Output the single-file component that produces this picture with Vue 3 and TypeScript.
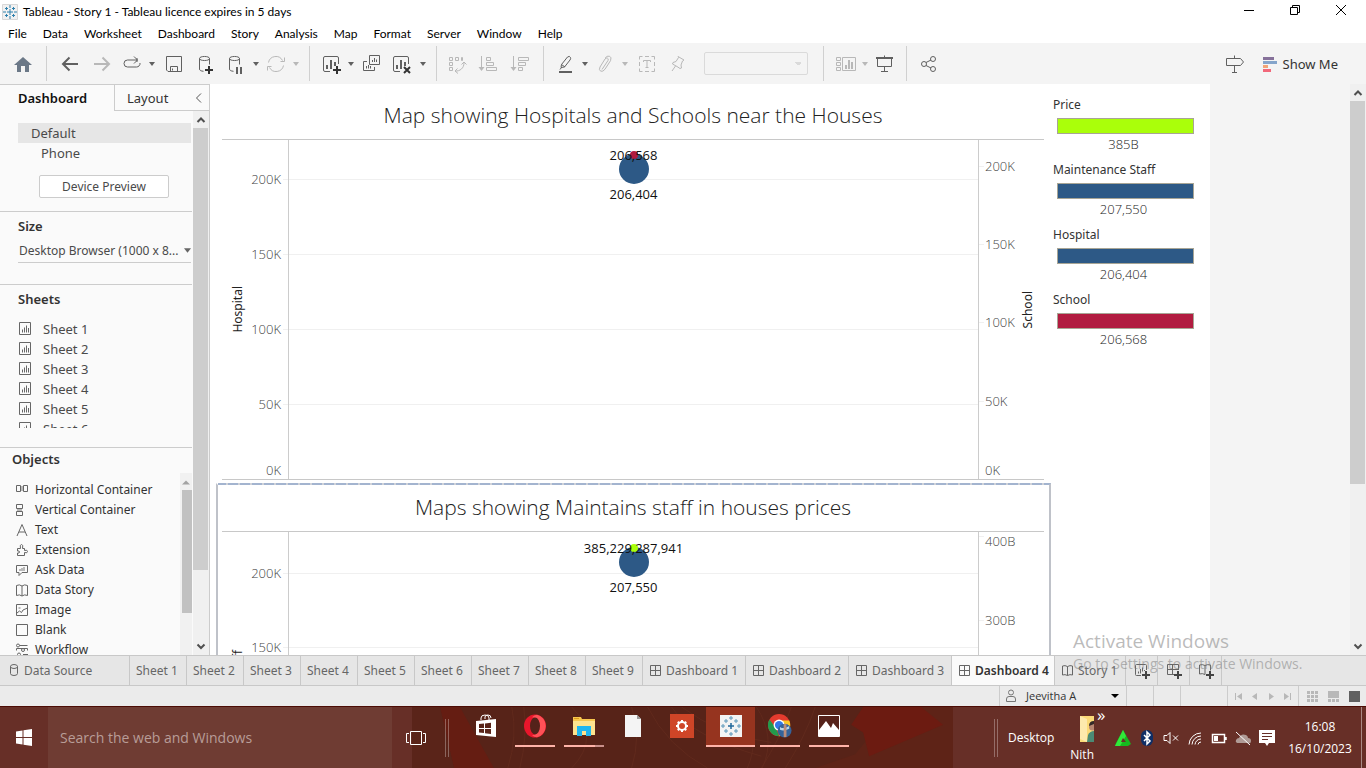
<script setup lang="ts">
import { ref } from 'vue'

interface Tool {
  name: string
  line?: string
  solid?: string
  bold?: string
  size?: 'wide' | 'tight' | 'caret'
  dim?: boolean
  kind?: 'separator' | 'combo'
}

const chartBox = 'M11 19.5H6a1.5 1.5 0 0 1-1.5-1.5V6A1.5 1.5 0 0 1 6 4.500h12a1.500 1.500 0 0 1 1.500 1.500v6'
const cylinder = 'M5.500 6.500c0-2.700 10-2.700 10 0s-10 2.700-10 0V17c0 1.500 1.500 2 4 2.300M15.500 6.500v6'
const bars = 'M7 13h2v4H7zM11 8h2v9h-2zM15 10h2v4h-2z'

const sep: Tool = { name: '', kind: 'separator' }
const caret = (name: string, dim = false): Tool => ({ name, size: 'caret', dim, solid: 'M3 10h6l-3 4z' })

const tools: Tool[] = [
  { name: 'Start page', solid: 'M12 5l9 8h-3v7h-4v-6h-4v6H6v-7H3z' },
  sep,
  { name: 'Undo', bold: 'M20 12H5M11.500 5.500L5 12l6.500 6.500' },
  { name: 'Redo', bold: 'M4 12h15M12.500 5.500L19 12l-6.500 6.500', dim: true },
  { name: 'Replay', size: 'tight', line: 'M17 8H7.500a3.500 3.500 0 0 0 0 7h9a3.500 3.500 0 0 0 3.500-4M14 4.500l3.500 3.500-3.500 3.500M17 6v4' },
  caret('Replay options'),
  { name: 'Save', line: 'M4.500 4.500h15v15H6l-1.500-1.500zM8.500 19.500v-5h7v5M10.500 16.500v2' },
  { name: 'New data source', line: cylinder, bold: 'M15 14v8M11 18h8' },
  { name: 'Pause auto updates', size: 'tight', line: cylinder, solid: 'M12 15h2v7h-2zM16 15h2v7h-2z' },
  caret('Update options'),
  { name: 'Refresh', size: 'tight', dim: true, line: 'M4.500 10.500a7.500 7.500 0 0 1 14-2M19.500 13.500a7.500 7.500 0 0 1-14 2M20.500 5.500v4h-4M3.500 18.500v-4h4' },
  caret('Refresh options', true),
  sep,
  { name: 'New worksheet', size: 'tight', line: chartBox, solid: bars, bold: 'M18 14v8M14 18h8' },
  caret('New sheet options'),
  { name: 'Duplicate', size: 'tight', line: 'M10.500 3.500h10v9h-10zM8 9.500H4.500v9h11V15M13.500 10V8M15.500 10V6M17.500 10V7.500M7.500 16.500V14M9.500 16.500V13M11.500 16.500V14' },
  { name: 'Clear sheet', line: chartBox, solid: bars, bold: 'M15 15l6 6M21 15l-6 6' },
  caret('Clear options'),
  sep,
  { name: 'Swap rows and columns', size: 'tight', dim: true, line: 'M3.500 5.500h3v3h-3zM9.500 5.500h3v3h-3zM15.500 5.500h1v3h-1zM3.500 10.500h3v3h-3zM3.500 15.500h3v3h-3zM9 19c5 .5 9-3 9-8M11.500 16.500L9 19l3 2.500M15.500 12.500l2.500-2.500 2.500 2.500' },
  { name: 'Sort ascending', dim: true, line: 'M5.500 4v13M10.500 5.500h4v3h-4zM10.500 10.500h7v3h-7zM10.500 15.500h10v3h-10z', solid: 'M2.500 15h6l-3 4z' },
  { name: 'Sort descending', dim: true, line: 'M5.500 4v13M10.500 5.500h10v3h-10zM10.500 10.500h7v3h-7zM10.500 15.500h4v3h-4z', solid: 'M2.500 15h6l-3 4z' },
  sep,
  { name: 'Highlight', size: 'tight', line: 'M8.500 12.500l6-7.500q2-1.500 3 .5.500 1-.5 2.500l-5.500 7-3.500.500zM8.500 12.500l3.500 2.500M8.500 15.500L7 17.500', solid: 'M6 19h13v2H6z' },
  caret('Highlight options'),
  { name: 'Group members', size: 'tight', dim: true, line: 'M9 17.500l6-9q.8-2-.7-2.500-1.300-.3-2.300 1l-5 8q-1.500 3 .7 4.200 2.300.8 4.300-2l5.500-8.500q1.500-3.500-1-4.500-2.500-.7-4.500 2' },
  caret('Group options', true),
  { name: 'Show mark labels', dim: true, line: 'M4.500 7.500v-3h3M10 4.500h4M16.500 4.500h3v3M19.500 10v4M19.500 16.500v3h-3M14 19.500h-4M7.500 19.500h-3v-3M4.500 14v-4M8.500 10V8.500h7V10M12 8.500v7M10.500 15.500h3' },
  { name: 'Fix axes', size: 'tight', dim: true, line: 'M13 4.500l6 3.500-1.500 1-1.500 4 .500 3-1.500.500-3-2-4.500-2.500.5-1.500 3-1 2.500-4zM10.500 14L7 19' },
  { name: 'Fit', kind: 'combo' },
  sep,
  { name: 'Show cards', size: 'tight', dim: true, line: 'M3.500 5.500h4v3h-4zM3.500 10.500h4v3h-4zM3.500 15.500h4v3h-4zM9.500 5.500h13v13h-13z', solid: 'M12 13h2v4h-2zM15 8h2v9h-2zM18 10h2v7h-2z' },
  caret('Card options', true),
  { name: 'Presentation mode', size: 'tight', solid: 'M3 5h17v2H3z', line: 'M4.500 7v7.500h14V7M11.500 14.500v5M8 19.500h7M11.500 3.500V5' },
  sep,
  { name: 'Share', line: 'M8.500 12a2.500 2.500 0 1 1-5 0 2.500 2.500 0 0 1 5 0zM17.500 7a2.500 2.500 0 1 1-5 0 2.500 2.500 0 0 1 5 0zM17.500 17a2.500 2.500 0 1 1-5 0 2.500 2.500 0 0 1 5 0zM8 10.500l5-2.500M8 13.500l5 2.500' },
]

const menus = ['File', 'Data', 'Worksheet', 'Dashboard', 'Story', 'Analysis', 'Map', 'Format', 'Server', 'Window', 'Help']
const sheets = [1, 2, 3, 4, 5, 6]

const objects = [
  { label: 'Horizontal Container', line: 'M1.500 2.500h4v6h-4zM8.500 2.500h4v6h-4z', shade: 'M6 3h2v5H6z' },
  { label: 'Vertical Container', line: 'M1.500 1.500h6v4h-6zM1.500 8.500h6v4h-6z', shade: 'M2 6h5v2H2z' },
  { label: 'Text', line: 'M2 13L7 1.500 12 13M4 9h6', shade: '' },
  { label: 'Extension', line: 'M2.500 5.500h3q-1-4 1-4t1 4h2v2q3-1 3 1t-3 1v3h-7V10q2 .5 2-1t-2-1z', shade: '' },
  { label: 'Ask Data', line: 'M1.500 2.500h11v7H7l-3 3v-3H1.500z', shade: 'M4 6h2v2H4zM6 5h2v3H6zM8 4h2v4H8z' },
  { label: 'Data Story', line: 'M1.500 2.500q3-1.500 5.500.5 2.500-2 5.500-.5v10q-3-1.500-5.500.5-2.500-2-5.500-.5zM7 3v10', shade: '' },
  { label: 'Image', line: 'M1.500 1.500h11v11h-11zM2 10l2.500-2 2 1.500L8 7l4.500-2', shade: 'M3.500 4h2v2h-2z' },
  { label: 'Blank', line: 'M1.500 1.500h11v11h-11z', shade: '' },
  { label: 'Workflow', line: 'M4.500 2.500a1.500 1.500 0 1 1-3 0 1.500 1.500 0 0 1 3 0zM4.500 2.500h8M1.500 7.500v-2h11v2M9.500 7a1.500 1.500 0 1 1-3 0 1.500 1.500 0 0 1 3 0zM5.500 11.500a1.500 1.500 0 1 1-3 0 1.500 1.500 0 0 1 3 0zM8 11.500h5', shade: '' },
]

interface Tick { text: string; value: number }
interface Chart {
  title: string
  left: { name: string; max: number; ticks: Tick[] }
  right: { name: string; max: number; ticks: Tick[] }
  big: { text: string; value: number }
  small: { text: string; value: number; color: string }
  selected: boolean
}

const thousands = [200, 150, 100, 50, 0].map((n) => ({ text: `${n}K`, value: n }))
const charts: Chart[] = [
  {
    title: 'Map showing Hospitals and Schools near the Houses',
    left: { name: 'Hospital', max: 226, ticks: thousands },
    right: { name: 'School', max: 216.4, ticks: thousands },
    big: { text: '206,404', value: 206.404 },
    small: { text: '206,568', value: 206.568, color: '#b11c40' },
    selected: false,
  },
  {
    title: 'Maps showing Maintains staff in houses prices',
    left: { name: 'Maintenance Staff', max: 227.4, ticks: thousands },
    right: { name: 'Price', max: 404.7, ticks: [400, 300, 200, 100, 0].map((n) => ({ text: `${n}B`, value: n })) },
    big: { text: '207,550', value: 207.55 },
    small: { text: '385,229,287,941', value: 385.2, color: '#aaff0a' },
    selected: true,
  },
]

const at = (value: number, max: number) => `${((1 - value / max) * 100).toFixed(2)}%`
const labelAt = (value: number, max: number) => `clamp(9px, ${at(value, max)}, calc(100% - 9px))`
const aboveZero = (ticks: Tick[]) => ticks.filter((t) => t.value > 0)

const legends = [
  { name: 'Price', value: '385B', color: '#aaff0a' },
  { name: 'Maintenance Staff', value: '207,550', color: '#2d5986' },
  { name: 'Hospital', value: '206,404', color: '#2d5986' },
  { name: 'School', value: '206,568', color: '#b11c40' },
]

const gridIcon = 'M1.500 1.500h10v10h-10zM6.500 1.500v10M1.500 6.500h10'
const storyIcon = 'M1.500 2q2.500-1 5 .5 2.500-1.500 5-.5v9q-2.500-1-5 .5-2.500-1.500-5-.5zM6.500 2.500v9'
const bookTabs = [
  ...Array.from({ length: 9 }, (_, i) => ({ label: `Sheet ${i + 1}`, kind: 'worksheet', icon: '' })),
  ...[1, 2, 3, 4].map((n) => ({ label: `Dashboard ${n}`, kind: 'board', icon: gridIcon })),
  { label: 'Story 1', kind: 'story', icon: storyIcon },
]
const activeTab = ref('Dashboard 4')
const newTabs = [
  { name: 'New worksheet', icon: 'M8 13.500H3.500a1 1 0 0 1-1-1v-9a1 1 0 0 1 1-1h9a1 1 0 0 1 1 1V8M5.500 9.500v2M7.500 7v4.500M9.500 5.500v4M11.500 8v1' },
  { name: 'New dashboard', icon: 'M9 12.500H2.500v-10h11V8M7.500 2.500v10M2.500 7.500h11' },
  { name: 'New story', icon: 'M8 12.500q-2.500-1.500-5.500-.5v-9q3-1 5.500.5 2.500-1.500 5.500-.5v5.500M8 3.500v9' },
]
const pagers = [
  { name: 'First', d: 'M1 2h1v7H1zM8 2v7L3 5.500z' },
  { name: 'Previous', d: 'M7 2v7L2 5.500z' },
  { name: 'Next', d: 'M3 2v7l5-3.500z' },
  { name: 'Last', d: 'M8 2h1v7H8zM2 2v7l5-3.500z' },
]
</script>

<template>
  <div class="desktop">
    <header class="titlebar">
      <svg class="logo" viewBox="0 0 16 16" aria-hidden="true">
        <path class="logo-frame" d="M.5.500h15v15H.5z" />
        <path class="logo-cross" d="M8 5v6M5 8h6M8 1v3M8 12v3M1 8h3M12 8h3M4.500 3v3M3 4.500h3M11.500 3v3M10 4.500h3M4.500 10v3M3 11.500h3M11.500 10v3M10 11.500h3" />
      </svg>
      <span class="window-title">Tableau - Story 1 - Tableau licence expires in 5 days</span>
      <button class="win-btn" aria-label="Minimize"><svg viewBox="0 0 12 12"><path d="M1 6.500h10" /></svg></button>
      <button class="win-btn" aria-label="Restore"><svg viewBox="0 0 12 12"><path d="M1.500 3.500h7v7h-7zM3.500 3.500v-2h7v7h-2" /></svg></button>
      <button class="win-btn" aria-label="Close"><svg viewBox="0 0 12 12"><path d="M1 1l10 10M11 1L1 11" /></svg></button>
    </header>

    <nav class="menubar">
      <button v-for="m in menus" :key="m">{{ m }}</button>
    </nav>

    <div class="toolbar">
      <template v-for="(t, i) in tools" :key="i">
        <span v-if="t.kind === 'separator'" class="tool-sep"></span>
        <select v-else-if="t.kind === 'combo'" class="tool-combo" :aria-label="t.name" disabled></select>
        <button v-else class="tool" :class="[t.size, { dim: t.dim, home: i === 0 }]" :aria-label="t.name">
          <svg :viewBox="t.size === 'caret' ? '0 0 12 24' : '0 0 24 24'">
            <path v-if="t.line" class="line" :d="t.line" />
            <path v-if="t.solid" class="solid" :d="t.solid" />
            <path v-if="t.bold" class="bold" :class="{ dark: t.line }" :d="t.bold" />
          </svg>
        </button>
      </template>
      <span class="spacer"></span>
      <button class="tool" aria-label="Data guide">
        <svg viewBox="0 0 24 24"><path class="line" d="M3.500 6.500h14l3 3.500-3 3.500h-14zM11.500 3.500v3M11.500 13.500v7M9 20.500h5" /></svg>
      </button>
      <button class="show-me">
        <svg viewBox="0 0 14 16" aria-hidden="true">
          <path d="M0 1h11v3H0z" fill="#86719a" /><path d="M0 5h14v3H0z" fill="#85a5cb" />
          <path d="M0 9h5v3H0z" fill="#f2a477" /><path d="M0 13h8v3H0z" fill="#f2687a" />
        </svg>
        Show Me
      </button>
    </div>

    <main class="workspace">
      <aside class="sidebar">
        <div class="side-tabs">
          <button class="side-tab on">Dashboard</button>
          <button class="side-tab off">Layout</button>
          <button class="collapse" aria-label="Collapse pane"><svg viewBox="0 0 8 12"><path d="M7 1.500L2.500 6 7 10.500" /></svg></button>
        </div>
        <div class="side-body">
          <div class="side-content">
            <section class="devices">
              <button class="device current">Default</button>
              <button class="device phone">Phone</button>
              <button class="preview">Device Preview</button>
            </section>
            <section class="size">
              <h2><label for="size">Size</label></h2>
              <div class="size-box">
                <select id="size"><option>Desktop Browser (1000 x 8...</option></select>
                <svg viewBox="0 0 8 5" aria-hidden="true"><path d="M0 0h8L4 5z" /></svg>
              </div>
            </section>
            <section class="sheets">
              <h2>Sheets</h2>
              <ul>
                <li v-for="n in sheets" :key="n">
                  <svg viewBox="0 0 14 14" aria-hidden="true"><path d="M1.500.500h11v12h-11zM4.500 7.500v3M6.500 5.500v5M8.500 3.500v7M10.500 6v4.500" /></svg>
                  Sheet {{ n }}
                </li>
              </ul>
            </section>
            <section class="objects">
              <div class="object-col">
                <h2>Objects</h2>
                <ul>
                  <li v-for="o in objects" :key="o.label">
                    <svg viewBox="0 0 14 14" aria-hidden="true"><path class="shade" :d="o.shade" /><path :d="o.line" /></svg>
                    {{ o.label }}
                  </li>
                </ul>
              </div>
              <div class="mini-scroll">
                <svg viewBox="0 0 12 16" aria-hidden="true"><path d="M2 11h8L6 7z" /></svg>
                <span></span>
              </div>
            </section>
          </div>
          <div class="scroll side-scroll">
            <svg viewBox="0 0 16 16" aria-hidden="true"><path d="M4.500 10.500L8 7l3.500 3.500" /></svg>
            <span class="thumb"></span>
            <svg class="end" viewBox="0 0 16 16" aria-hidden="true"><path d="M4.500 6L8 9.500 11.500 6" /></svg>
          </div>
        </div>
      </aside>

      <div class="canvas">
        <div class="page">
          <div class="views">
            <article v-for="c in charts" :key="c.title" class="view" :class="{ selected: c.selected }">
              <h1>{{ c.title }}</h1>
              <div class="plot">
                <div class="axis left">
                  <span class="axis-name">{{ c.left.name }}</span>
                  <div class="ticks">
                    <span v-for="t in c.left.ticks" :key="t.text" class="tick" :style="{ top: labelAt(t.value, c.left.max) }">{{ t.text }}</span>
                    <i v-for="t in aboveZero(c.left.ticks)" :key="t.value" class="notch" :style="{ top: at(t.value, c.left.max) }"></i>
                  </div>
                </div>
                <div class="pane">
                  <i v-for="t in aboveZero(c.left.ticks)" :key="t.text" class="gridline" :style="{ top: at(t.value, c.left.max) }"></i>
                  <span class="mark big" :style="{ top: at(c.big.value, c.left.max) }"></span>
                  <span class="mark small" :style="{ top: at(c.small.value, c.right.max), background: c.small.color }"></span>
                  <span class="mark-label" :style="{ top: at(c.small.value, c.right.max) }">{{ c.small.text }}</span>
                  <span class="mark-label below" :style="{ top: at(c.big.value, c.left.max) }">{{ c.big.text }}</span>
                </div>
                <div class="axis right">
                  <div class="ticks">
                    <span v-for="t in c.right.ticks" :key="t.text" class="tick" :style="{ top: labelAt(t.value, c.right.max) }">{{ t.text }}</span>
                    <i v-for="t in aboveZero(c.right.ticks)" :key="t.value" class="notch" :style="{ top: at(t.value, c.right.max) }"></i>
                  </div>
                  <span class="axis-name">{{ c.right.name }}</span>
                </div>
              </div>
            </article>
          </div>
          <div class="legends">
            <div v-for="l in legends" :key="l.name" class="legend">
              <h3>{{ l.name }}</h3>
              <div class="swatch" :style="{ background: l.color }"></div>
              <p>{{ l.value }}</p>
            </div>
          </div>
        </div>
        <div class="scroll page-scroll">
          <svg viewBox="0 0 16 16" aria-hidden="true"><path d="M4.500 10.500L8 7l3.500 3.500" /></svg>
          <span class="thumb"></span>
          <svg class="end" viewBox="0 0 16 16" aria-hidden="true"><path d="M4.500 6L8 9.500 11.500 6" /></svg>
        </div>
      </div>
    </main>

    <nav class="book-tabs">
      <button class="book-tab source">
        <svg viewBox="0 0 13 13" aria-hidden="true"><path d="M2.500 2.500q0-2 3.500-2t3.500 2-3.500 2-3.500-2v7q0 2 3.500 2t3.500-2v-7" /></svg>
        Data Source
      </button>
      <button
        v-for="t in bookTabs"
        :key="t.label"
        class="book-tab"
        :class="[t.kind, { active: t.label === activeTab }]"
        @click="activeTab = t.label"
      >
        <svg v-if="t.icon" viewBox="0 0 13 13" aria-hidden="true"><path :d="t.icon" /></svg>
        {{ t.label }}
      </button>
      <button v-for="t in newTabs" :key="t.name" class="book-tab new" :aria-label="t.name">
        <svg viewBox="0 0 18 18"><path :d="t.icon" /><path class="plus" d="M13 9v8M9 13h8" /></svg>
      </button>
    </nav>

    <footer class="status">
      <button class="user">
        <svg viewBox="0 0 12 14" aria-hidden="true"><path d="M8.500 3.500a2.500 2.500 0 1 1-5 0 2.500 2.500 0 0 1 5 0zM1.500 12.500V10q0-2.500 2.500-2.500h4q2.500 0 2.500 2.500v2.500z" /></svg>
        <span>Jeevitha A</span>
        <svg class="arrow" viewBox="0 0 8 4" aria-hidden="true"><path d="M0 0h8L4 4z" /></svg>
      </button>
      <span class="cell"></span>
      <span class="cell"></span>
      <span class="cell broad"></span>
      <span class="cell pager">
        <button v-for="p in pagers" :key="p.name" :aria-label="p.name"><svg viewBox="0 0 10 11"><path :d="p.d" /></svg></button>
      </span>
      <span class="cell modes">
        <button aria-label="Sheet sorter"><svg viewBox="0 0 11 11"><path d="M0 0h3v3H0zM4 0h3v3H4zM8 0h3v3H8zM0 4h3v3H0zM4 4h3v3H4zM8 4h3v3H8zM0 8h3v3H0zM4 8h3v3H4zM8 8h3v3H8z" /></svg></button>
        <button aria-label="Filmstrip"><svg viewBox="0 0 11 11"><path d="M0 0h11v7H0zM0 8h3v3H0zM4 8h3v3H4zM8 8h3v3H8z" /></svg></button>
        <button class="on" aria-label="Tabs"><svg viewBox="0 0 11 11"><path d="M0 0h11v11H0z" /></svg></button>
      </span>
    </footer>

    <div class="watermark">
      <p class="big-line">Activate Windows</p>
      <p>Go to Settings to activate Windows.</p>
    </div>

    <footer class="taskbar">
      <button class="start" aria-label="Start">
        <svg viewBox="0 0 16 17"><path d="M0 2.500L6.500 1.500V8H0zM7.500 1.300L16 0v8H7.500zM0 9h6.500v6.500L0 14.500zM7.500 9H16v8l-8.500-1.300z" /></svg>
      </button>
      <input class="search" type="text" aria-label="Search" placeholder="Search the web and Windows" />
      <button class="task-view" aria-label="Task view">
        <svg viewBox="0 0 20 16"><path d="M4.500 1.500h11v13h-11zM3 3.500H.5v9H3M17 3.500h2.500v9H17" /></svg>
      </button>
      <div class="apps">
        <svg class="wood" viewBox="0 0 542 62" preserveAspectRatio="none" aria-hidden="true">
          <path d="M28 0h20l34 62H42z" fill="#651d12" />
          <path d="M492 0l-27 22-21 26-40 14h138V0z" fill="#5e2317" />
          <path d="M452 0h58l22 18-74 32-6-24-12-8z" fill="#6c1b11" />
          <path d="M0 0h28l14 62H0z" fill="#5a2419" />
          <path d="M100 0q6 30-4 62M112 0q4 30-4 62M160 0q30 30 0 62M220 0q10 30 0 62M260 0q20 30 90 50M236 0q20 40 60 62M270 0q40 30 90 36M330 0q20 30 6 62M345 0q20 30 6 62M380 0q-10 30-30 62M404 0q-10 30-30 62" fill="none" stroke="#60291c" />
        </svg>
        <i class="grip"></i>
        <div class="app-row">
          <button class="app" aria-label="Store">
            <svg viewBox="0 0 24 24"><path d="M2 7l20-2v18L2 21z" fill="#fff" /><path d="M7 6V4q0-3 4-3t4 3v2M11 5V3q0-2 3-2t3 3" fill="none" stroke="#fff" /><path d="M5 10l5-.5V14H5zM11 9.400l6-.6V14h-6zM5 15h5v4l-5-.5zM11 15h6v5l-6-.8z" fill="#5a2419" /></svg>
          </button>
          <button class="app open" aria-label="Opera">
            <svg viewBox="0 0 24 24"><ellipse cx="12" cy="12" rx="11" ry="11.500" fill="#e8162b" /><path d="M14 .800a11 11.500 0 0 1 0 22.500q-3 0-5-2 6 0 7-9-1-9-7-9 2-2.500 5-2.500z" fill="#ff5157" /><ellipse cx="12" cy="12" rx="5" ry="8.500" fill="#54221a" /></svg>
          </button>
          <button class="app open stacked" aria-label="File Explorer">
            <svg viewBox="0 0 24 24"><path d="M1 3h8l1 2h13v16H1z" fill="#f7c64e" /><path d="M1 7h22v14H1z" fill="#fde38f" /><path d="M2 4h5v1H2z" fill="#d99a1c" /><path d="M5 12h14v10h-5v-5h-4v5H5z" fill="#1fb6f0" /></svg>
          </button>
          <button class="app" aria-label="Document">
            <svg viewBox="0 0 24 24"><path d="M4 1h12l4 4v18H4z" fill="#f4f4f4" /><path d="M16 1l4 4h-4z" fill="#9a9a9a" /></svg>
          </button>
          <button class="app" aria-label="Settings">
            <svg viewBox="0 0 24 24"><path d="M0 0h24v24H0z" fill="#cf4527" /><circle cx="12" cy="12" r="4" fill="none" stroke="#fff" stroke-width="2" /><path d="M12 6v2M12 16v2M6 12h2M16 12h2M7.800 7.800l1.400 1.400M14.800 14.800l1.400 1.400M16.200 7.800l-1.400 1.400M9.200 14.800l-1.400 1.400" stroke="#fff" stroke-width="2" /></svg>
          </button>
          <button class="app open current" aria-label="Tableau">
            <svg viewBox="0 0 24 24"><path d="M1 1h22v22H1z" fill="#f3f3f3" /><path d="M12 9v6M9 12h6" stroke="#22689a" stroke-width="1.500" /><path d="M12 2v4M10 4h4M12 18v4M10 20h4M4 10v4M2 12h4M20 10v4M18 12h4M7 5v4M5 7h4M17 5v4M15 7h4M7 15v4M5 17h4M17 15v4M15 17h4" stroke="#5b96b9" /></svg>
          </button>
          <button class="app open" aria-label="Chrome">
            <svg viewBox="0 0 26 26"><circle cx="12" cy="12" r="12" fill="#e33b2e" /><path d="M1.600 6L9 16l3 8A12 12 0 0 1 1.600 6z" fill="#229a4c" /><path d="M12 7h11a12 12 0 0 1-11 17l5-9z" fill="#fbc726" /><circle cx="12" cy="12" r="6" fill="#fff" /><circle cx="12" cy="12" r="4.500" fill="#3478e5" /><circle cx="18" cy="18" r="7.500" fill="#35639a" /><path d="M13 14q4 3 10-1v3q-6 3-10 1z" fill="#b9d6e8" /><path d="M17 11h3v14h-3z" fill="#bd8d7a" /></svg>
          </button>
          <button class="app open" aria-label="Photos">
            <svg viewBox="0 0 24 24"><path d="M1.500 1.500h21v21h-21z" fill="#55221a" stroke="#fff" /><path d="M2 16l7-9 5 7 2-5 6 7v6H2z" fill="#fff" /></svg>
          </button>
        </div>
      </div>
      <div class="tray">
        <i class="grip"></i>
        <span class="desk-label">Desktop</span>
        <button class="folder">
          <svg viewBox="0 0 14 28" aria-hidden="true"><path d="M0 1h14v24l-7 2H0z" fill="#fbd977" /><path d="M0 1l7 3v23l-7-3z" fill="#fde9ad" /><path d="M8 20q2-4 6-4v11H7z" fill="#4b8a75" /><circle cx="12.500" cy="12" r="3.500" fill="#b98670" /><path d="M9 11q0-5 5-5v3z" fill="#342a28" /></svg>
          Nith
        </button>
        <button class="more" aria-label="More">»</button>
        <button class="tray-btn" aria-label="Driver updater"><svg viewBox="0 0 18 18"><path d="M9 1l8 14-3 2H1l1-3z" fill="#16b81f" /><path d="M9 1l3 6-6 10H1z" fill="#31e83a" /><path d="M9 9l3 4H7z" fill="#672f27" /></svg></button>
        <button class="tray-btn" aria-label="Bluetooth"><svg viewBox="0 0 18 18"><rect x="3" y="1" width="12" height="16" rx="6" fill="#0f2e66" /><path d="M6 6l6 6-3 3V3l3 3-6 6" fill="none" stroke="#fff" stroke-width="1.500" /></svg></button>
        <button class="tray-btn" aria-label="Volume muted"><svg viewBox="0 0 18 18"><path d="M2 6.500h3l3-3v11l-3-3H2zM11 6.500l5 5M16 6.500l-5 5" fill="none" stroke="#fff" /></svg></button>
        <button class="tray-btn" aria-label="Network"><svg viewBox="0 0 18 18"><path d="M3 15.500A12 12 0 0 1 15 4M6 15.500a9 9 0 0 1 9-8.500M9 15.500a6 6 0 0 1 6-5.500M12 15.500a3 3 0 0 1 3-2.500" fill="none" stroke="#fff" /></svg></button>
        <button class="tray-btn" aria-label="Battery"><svg viewBox="0 0 18 18"><path d="M2.500 5.500h12v8h-12zM16 8v3" fill="none" stroke="#fff" stroke-width="1.500" /><path d="M4 7h4v5H4z" fill="#fff" /></svg></button>
        <button class="tray-btn" aria-label="Cloud sync off"><svg viewBox="0 0 18 18"><path d="M3 14q-2-1-1-3t3-2q2-5 7-3 2 1 2 3 3 0 3 3t-3 2z" fill="#b09b96" /><path d="M2 3l14 13" stroke="#fff" /></svg></button>
        <button class="tray-btn" aria-label="Notifications"><svg viewBox="0 0 18 18"><path d="M1 1h16v13h-6l-2 3-2-3H1z" fill="#fff" /><path d="M4 4.500h10M4 7.500h10M4 10.500h6" stroke="#672f27" /></svg></button>
        <time class="clock"><span>16:08</span><span>16/10/2023</span></time>
      </div>
    </footer>
  </div>
</template>

<style>
body {
  margin: 0;
  overflow: hidden;
}
</style>

<style scoped>
* {
  box-sizing: border-box;
}
.desktop {
  position: relative;
  display: flex;
  flex-direction: column;
  height: 100vh;
  font: 13px/20px 'Noto Sans', 'Open Sans', sans-serif;
  color: #333;
  background: #fff;
}
button {
  padding: 0;
  border: 0;
  background: none;
  font: inherit;
  color: inherit;
  text-align: left;
}
svg {
  display: block;
  flex: none;
}
h1, h2, h3, p, ul {
  margin: 0;
  padding: 0;
  list-style: none;
}

/* window chrome */
.titlebar {
  display: flex;
  align-items: center;
  height: 24px;
  padding-left: 2px;
  font: 12px/16px Lato, 'Open Sans', sans-serif;
  color: #000;
}
.logo {
  width: 16px;
  height: 16px;
  margin-right: 5px;
}
.logo-frame {
  fill: #f1f1f1;
  stroke: #d8d8d8;
}
.logo-cross {
  fill: none;
  stroke: #2f81ad;
}
.window-title {
  flex: 1;
}
.win-btn {
  display: flex;
  justify-content: center;
  width: 46px;
  padding-bottom: 4px;
}
.win-btn:last-child {
  margin-right: 2px;
}
.win-btn svg {
  width: 12px;
  height: 12px;
  fill: none;
  stroke: #000;
}
.menubar {
  display: flex;
  gap: 16px;
  height: 19px;
  padding-left: 8px;
  font: 12px/19px Lato, 'Open Sans', sans-serif;
  color: #000;
}

/* toolbar */
.toolbar {
  display: flex;
  align-items: center;
  height: 41px;
  padding: 0 28px 0 7px;
  background: #f4f4f4;
}
.tool {
  display: flex;
  justify-content: center;
  width: 32px;
  color: #606060;
}
.tool.tight {
  width: 28px;
}
.tool.caret {
  width: 12px;
}
.tool.dim {
  color: #b8b8b8;
}
.tool.home {
  color: #6b7887;
}
.tool svg {
  width: 24px;
  height: 24px;
}
.tool.caret svg {
  width: 12px;
}
.line {
  fill: none;
  stroke: currentColor;
}
.solid {
  fill: currentColor;
}
.bold {
  fill: none;
  stroke: currentColor;
  stroke-width: 2;
}
.bold.dark {
  stroke: #333;
}
.tool-sep {
  width: 1px;
  height: 35px;
  margin: 0 7px;
  background: #d0d0d0;
}
.tool-combo {
  width: 104px;
  height: 23px;
  margin: 0 8px 0 13px;
  border: 1px solid #d0d0d0;
  border-radius: 2px;
  appearance: none;
  background: conic-gradient(from -45deg at 50% 100%, #d0d0d0 90deg, transparent 0) right 5px center / 8px 4px no-repeat;
}
.spacer {
  flex: 1;
}
.show-me {
  display: flex;
  align-items: center;
  gap: 6px;
  margin-left: 12px;
  font-size: 13px;
}
.show-me svg {
  width: 14px;
  height: 16px;
}

/* workspace */
.workspace {
  display: flex;
  flex: 1;
  min-height: 0;
}
.sidebar {
  display: flex;
  flex-direction: column;
  flex: none;
  width: 210px;
  background: #fafafa;
  border-top: 1px solid #ccc;
  border-right: 1px solid #ccc;
}
.side-tabs {
  display: flex;
  height: 26px;
  line-height: 24px;
}
.side-tab.on {
  width: 114px;
  padding-left: 18px;
  font-weight: 600;
  color: #111;
}
.side-tab.off {
  flex: 1;
  padding-left: 12px;
  border: solid #ccc;
  border-width: 0 0 1px 1px;
}
.collapse {
  width: 15px;
  border-bottom: 1px solid #ccc;
}
.collapse svg {
  width: 8px;
  height: 12px;
}
.collapse path {
  fill: none;
  stroke: #555;
}
.side-body {
  display: flex;
  flex: 1;
  min-height: 0;
}
.side-content {
  display: flex;
  flex-direction: column;
  flex: 1;
  margin-right: 1px;
  color: #4a4a4a;
}
h2 {
  font-size: 13px;
  font-weight: 600;
  line-height: 20px;
  color: #333;
}
.devices {
  display: flex;
  flex-direction: column;
  height: 101px;
  padding: 12px 1px 0 18px;
  border-bottom: 1px solid #ccc;
}
.device {
  height: 20px;
  padding-left: 13px;
}
.device.current {
  background: #e6e6e6;
}
.device.phone {
  padding-left: 23px;
}
.preview {
  width: 130px;
  height: 23px;
  margin: 12px 0 0 21px;
  border: 1px solid #ccc;
  border-radius: 2px;
  background: #fff;
  font-size: 12px;
  line-height: 20px;
  text-align: center;
}
.size {
  height: 73px;
  padding: 4px 1px 0 18px;
  border-bottom: 1px solid #ccc;
}
.size-box {
  display: flex;
  align-items: center;
  justify-content: space-between;
  height: 24px;
  margin-top: 3px;
  border-bottom: 1px solid #ccc;
}
.size-box select {
  flex: 1;
  min-width: 0;
  padding: 0 0 0 1px;
  border: 0;
  appearance: none;
  background: none;
  font: inherit;
  font-size: 12px;
  color: #4a4a4a;
}
.size-box svg {
  width: 7px;
  height: 5px;
  fill: #666;
}
.sheets {
  height: 163px;
  padding: 4px 0 0 18px;
  border-bottom: 1px solid #ccc;
}
.sheets ul {
  height: 109px;
  margin-top: 10px;
  overflow: hidden;
}
.sheets li {
  display: flex;
  align-items: center;
  gap: 11px;
  height: 20px;
}
.sheets svg {
  width: 14px;
  height: 14px;
}
.sheets path {
  fill: none;
  stroke: #666;
}
.objects {
  display: flex;
  flex: 1;
  min-height: 0;
  overflow: hidden;
  color: #333;
}
.object-col {
  flex: 1;
  padding: 1px 0 0 12px;
}
.object-col ul {
  margin-top: 11px;
  padding-left: 3px;
}
.object-col li {
  display: flex;
  align-items: center;
  gap: 6px;
  height: 20px;
  font-size: 12px;
  white-space: nowrap;
}
.object-col svg {
  width: 14px;
  height: 14px;
}
.object-col path {
  fill: none;
  stroke: #666;
}
.object-col path.shade {
  fill: #b8b8b8;
  stroke: none;
}
.mini-scroll {
  width: 12px;
  margin-top: 25px;
  background: #f1f1f1;
}
.mini-scroll svg {
  width: 12px;
  height: 17px;
  fill: #a3a3a3;
}
.mini-scroll span {
  display: block;
  height: 123px;
  margin-left: 2px;
  background: #c1c1c1;
}
.scroll {
  display: flex;
  flex-direction: column;
  flex: none;
  width: 16px;
  background: #f0f0f0;
}
.scroll svg {
  width: 16px;
  height: 17px;
  fill: none;
  stroke: #505050;
  stroke-width: 2;
}
.scroll .end {
  margin-top: auto;
}
.thumb {
  height: 442px;
  margin-right: 1px;
  background: #cdcdcd;
}
.page-scroll .thumb {
  height: 383px;
}

/* dashboard canvas */
.canvas {
  display: flex;
  flex: 1;
  min-width: 0;
  overflow: hidden;
  background: #f4f4f4;
}
.page {
  display: flex;
  flex: 1;
  margin-right: 140px;
  background: #fff;
}
.views {
  flex: 1;
  padding: 7px 0 0 6px;
}
.view {
  padding: 0 5px 1px 4px;
  border: 2px solid transparent;
}
.view.selected {
  border-color: transparent #bfc2c9 #bfc2c9;
  background: repeating-linear-gradient(90deg, #a3b4cf 0 10px, #cfd2d8 10px 12px) center top / 100% 2px no-repeat border-box;
}
h1 {
  height: 46px;
  font: 300 21px/44px 'Open Sans', 'Noto Sans', sans-serif;
  text-align: center;
  color: #222;
}
.plot {
  display: flex;
  height: 341px;
  border: solid #c8c8c8;
  border-width: 1px 0;
}
.axis {
  display: flex;
  flex: none;
  width: 67px;
}
.axis.left {
  border-right: 1px solid #ccc;
}
.axis.right {
  width: 66px;
  border-left: 1px solid #ccc;
}
.axis-name {
  align-self: center;
  writing-mode: vertical-rl;
  transform: rotate(180deg);
  width: 32px;
  line-height: 32px;
  text-align: center;
  font-size: 12px;
  white-space: nowrap;
  color: #222;
}
.ticks {
  position: relative;
  flex: 1;
}
.tick {
  position: absolute;
  right: 7px;
  margin-top: -9px;
  font: 300 13px/18px 'Open Sans', sans-serif;
  color: #444;
}
.axis.right .tick {
  right: auto;
  left: 6px;
}
.notch {
  position: absolute;
  right: 0;
  width: 5px;
  height: 1px;
  background: #f0f0f0;
}
.axis.right .notch {
  right: auto;
  left: 0;
}
.pane {
  position: relative;
  flex: 1;
}
.gridline {
  position: absolute;
  left: 0;
  right: 0;
  height: 1px;
  background: #f0f0f0;
}
.mark {
  position: absolute;
  left: 50%;
  border-radius: 50%;
  transform: translate(-50%, -50%);
}
.big {
  width: 30px;
  height: 30px;
  background: #2d5986;
}
.small {
  width: 8px;
  height: 8px;
}
.mark-label {
  position: absolute;
  left: 50%;
  transform: translate(-50%, -50%);
  font: 13px/16px 'Open Sans', sans-serif;
  color: #111;
}
.mark-label.below {
  margin-top: 25px;
}
.legends {
  flex: none;
  width: 159px;
  padding: 11px 0 0 2px;
}
.legend {
  height: 65px;
}
h3 {
  font-size: 12px;
  font-weight: 400;
  line-height: 20px;
}
.swatch {
  width: 137px;
  height: 16px;
  margin: 3px 0 0 4px;
  border: 1px solid #a8a595;
}
.legend p {
  width: 141px;
  font: 300 13px/20px 'Open Sans', sans-serif;
  text-align: center;
  color: #222;
}

/* workbook tabs */
.book-tabs {
  display: flex;
  flex: none;
  height: 31px;
  background: #e6e6e6;
  border: solid #c8c8c8;
  border-width: 1px 0;
}
.book-tab {
  display: flex;
  align-items: center;
  gap: 4px;
  flex: none;
  padding-left: 6px;
  border-right: 1px solid #c8c8c8;
  font-size: 12px;
  white-space: nowrap;
  color: #666;
}
.book-tab svg {
  width: 13px;
  height: 13px;
}
.book-tab path {
  fill: none;
  stroke: #666;
}
.book-tab.source {
  width: 130px;
  padding-left: 8px;
  gap: 3px;
}
.book-tab.worksheet {
  width: 57px;
}
.book-tab.board {
  width: 103px;
}
.book-tab.story {
  width: 71px;
}
.book-tab.new {
  width: 32px;
  padding-left: 7px;
}
.book-tab.new svg {
  width: 18px;
  height: 18px;
}
.book-tab path.plus {
  stroke: #444;
  stroke-width: 2;
}
.book-tab.active {
  background: #fafafa;
  font-weight: 600;
  color: #333;
}

/* status bar */
.status {
  display: flex;
  flex: none;
  justify-content: flex-end;
  height: 20px;
  background: #ebebeb;
}
.user {
  display: flex;
  align-items: center;
  gap: 9px;
  width: 127px;
  padding: 0 7px 0 5px;
  border-left: 1px solid #ccc;
  font: 11px/18px 'Open Sans', sans-serif;
}
.user span {
  flex: 1;
}
.user svg {
  width: 12px;
  height: 14px;
  fill: none;
  stroke: #777;
}
.user .arrow {
  width: 8px;
  height: 4px;
  fill: #000;
  stroke: none;
}
.cell {
  display: flex;
  align-items: center;
  width: 27px;
  border-left: 1px solid #ccc;
}
.cell.broad {
  width: 47px;
}
.pager {
  width: 71px;
  padding-left: 6px;
  gap: 6px;
}
.pager svg {
  width: 10px;
  height: 11px;
  fill: #b8b8b8;
}
.modes {
  width: 68px;
  padding-left: 8px;
  gap: 10px;
}
.modes svg {
  width: 11px;
  height: 11px;
  fill: #b8b8b8;
}
.modes .on svg {
  fill: #606060;
}

/* desktop watermark */
.watermark {
  position: absolute;
  right: 57px;
  bottom: 93px;
  width: 236px;
  font: 14px/22px 'Open Sans', sans-serif;
  white-space: nowrap;
  color: rgba(120, 120, 120, 0.5);
  pointer-events: none;
}
.big-line {
  font-size: 19px;
  line-height: 24px;
}

/* taskbar */
.taskbar {
  display: flex;
  flex: none;
  height: 62px;
  border-top: 1px solid #4c0c05;
  background: #672f27;
  font: 12px/20px 'Open Sans', sans-serif;
  color: #fff;
}
.start {
  display: flex;
  align-items: center;
  justify-content: center;
  width: 48px;
}
.start svg {
  width: 16px;
  height: 17px;
  fill: #fff;
}
.search {
  width: 344px;
  padding: 0 0 0 12px;
  border: 0;
  outline: 0;
  background: #6f3c33;
  font: 14px/20px 'Open Sans', sans-serif;
  color: #fff;
}
.search::placeholder {
  color: #b89d98;
  opacity: 1;
}
.task-view {
  display: flex;
  align-items: center;
  justify-content: center;
  width: 48px;
  margin-right: -28px;
  z-index: 1;
}
.task-view svg {
  width: 20px;
  height: 16px;
  fill: none;
  stroke: #fff;
}
.apps {
  position: relative;
  display: flex;
  flex: 1;
  background: #572318;
}
.wood {
  position: absolute;
  inset: 0;
  width: 100%;
  height: 100%;
}
.grip {
  position: relative;
  flex: none;
  align-self: center;
  width: 4px;
  height: 38px;
  border: solid rgba(255, 255, 255, 0.3);
  border-width: 0 1px;
}
.apps .grip {
  margin-left: 33px;
}
.app-row {
  position: relative;
  display: flex;
  height: 40px;
  margin-left: 12px;
}
.app {
  display: flex;
  justify-content: center;
  align-items: center;
  width: 49px;
  border-bottom: 2px solid transparent;
  background: linear-gradient(#ffb3a8, #ffb3a8) center bottom / 0 2px no-repeat border-box;
}
.app.open {
  background-size: 40px 2px;
}
.app.stacked {
  background: linear-gradient(90deg, #ffb3a8 31px, #c9908a 0) center bottom / 40px 2px no-repeat border-box;
}
.app.current {
  background-color: #96341f;
  background-size: 100% 2px;
}
.app svg {
  width: 24px;
  height: 24px;
}
.tray {
  display: flex;
  align-items: center;
  width: 409px;
  border-right: 1px solid #a98a85;
  margin-right: 4px;
  padding-left: 41px;
}
.desk-label {
  width: 43px;
  margin-left: 10px;
}
.folder {
  display: flex;
  flex-direction: column;
  align-items: flex-end;
  align-self: stretch;
  justify-content: space-between;
  width: 23px;
  margin-left: 20px;
  padding: 8px 0 4px;
  line-height: 18px;
}
.folder svg {
  width: 14px;
  height: 28px;
}
.more {
  align-self: flex-start;
  width: 17px;
  padding-left: 3px;
  font-size: 17px;
  line-height: 16px;
}
.tray-btn {
  width: 24px;
}
.tray-btn svg {
  width: 18px;
  height: 18px;
  margin: auto;
}
.clock {
  display: flex;
  flex: 1;
  flex-direction: column;
  gap: 2px;
  text-align: center;
  white-space: nowrap;
}
</style>
